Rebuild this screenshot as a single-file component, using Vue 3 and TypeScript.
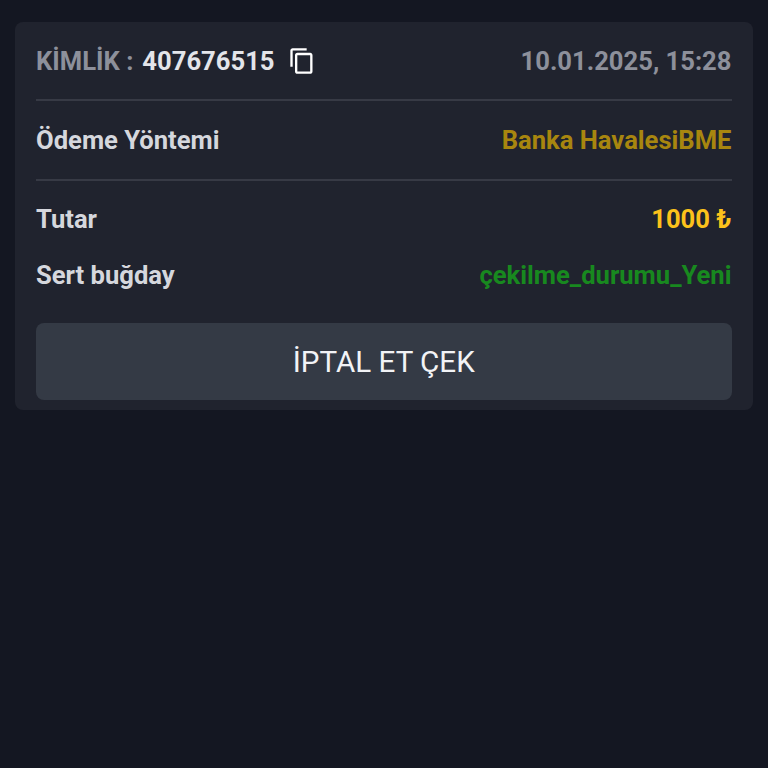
<template>
  <div class="page">
    <div class="card">
      <div class="row head">
        <div class="id">
          <span class="id-label">KİMLİK :</span>
          <span class="id-value">407676515</span>
          <svg class="copy" viewBox="0 0 24 24" width="28" height="28" fill="#fff">
            <path d="M16 1H4c-1.1 0-2 .9-2 2v14h2V3h12V1zm3 4H8c-1.1 0-2 .9-2 2v14c0 1.1.9 2 2 2h11c1.1 0 2-.9 2-2V7c0-1.1-.9-2-2-2zm0 16H8V7h11v14z" />
          </svg>
        </div>
        <span class="date">10.01.2025, 15:28</span>
      </div>
      <div class="row method">
        <span class="label">Ödeme Yöntemi</span>
        <span class="bank">Banka HavalesiBME</span>
      </div>
      <div class="details">
        <div class="row detail">
          <span class="label">Tutar</span>
          <span class="amount">1000 ₺</span>
        </div>
        <div class="row detail">
          <span class="label">Sert buğday</span>
          <span class="status">{{ status }}</span>
        </div>
      </div>
      <button class="cancel" type="button">İPTAL ET ÇEK</button>
    </div>
  </div>
</template>

<script setup lang="ts">
const status: string = 'çekilme_durumu_Yeni';
</script>

<style>
html,
body {
  background: #141722;
}
</style>

<style scoped>
.page {
  min-height: 768px;
  box-sizing: border-box;
  padding: 22px 15px 0 15px;
  background: #141722;
  font-family: Roboto, 'Liberation Sans', sans-serif;
}

.card {
  width: 737.5px;
  height: 388px;
  box-sizing: border-box;
  padding: 0 21px 10px 21px;
  background: #20232e;
  border-radius: 8px;
  display: flex;
  flex-direction: column;
}

.row {
  display: flex;
  align-items: center;
  justify-content: space-between;
  font-size: 25.6px;
  font-weight: 700;
}

.head {
  height: 77px;
  border-bottom: 2px solid #373a45;
  box-sizing: content-box;
}

.method {
  height: 78px;
  box-sizing: content-box;
  border-bottom: 2px solid #373a45;
}

.id {
  display: flex;
  align-items: center;
}

.id-label {
  color: #8d909b;
}

.id-value {
  margin-left: 9px;
  color: #e3e5ea;
}

.copy {
  margin-left: 13px;
}

.date {
  color: #8d909b;
}

.label {
  color: #d5d7dd;
}

.bank {
  color: #a8860f;
}

.details {
  padding-top: 10px;
  display: flex;
  flex-direction: column;
}

.detail {
  height: 56px;
}

.amount {
  color: #fcc21b;
}

.status {
  color: #18891f;
}

.cancel {
  margin-top: auto;
  height: 77px;
  width: 100%;
  border: none;
  border-radius: 8px;
  background: #343a45;
  color: #f2f3f6;
  font-family: inherit;
  font-size: 29.6px;
  font-weight: 400;
}
</style>
